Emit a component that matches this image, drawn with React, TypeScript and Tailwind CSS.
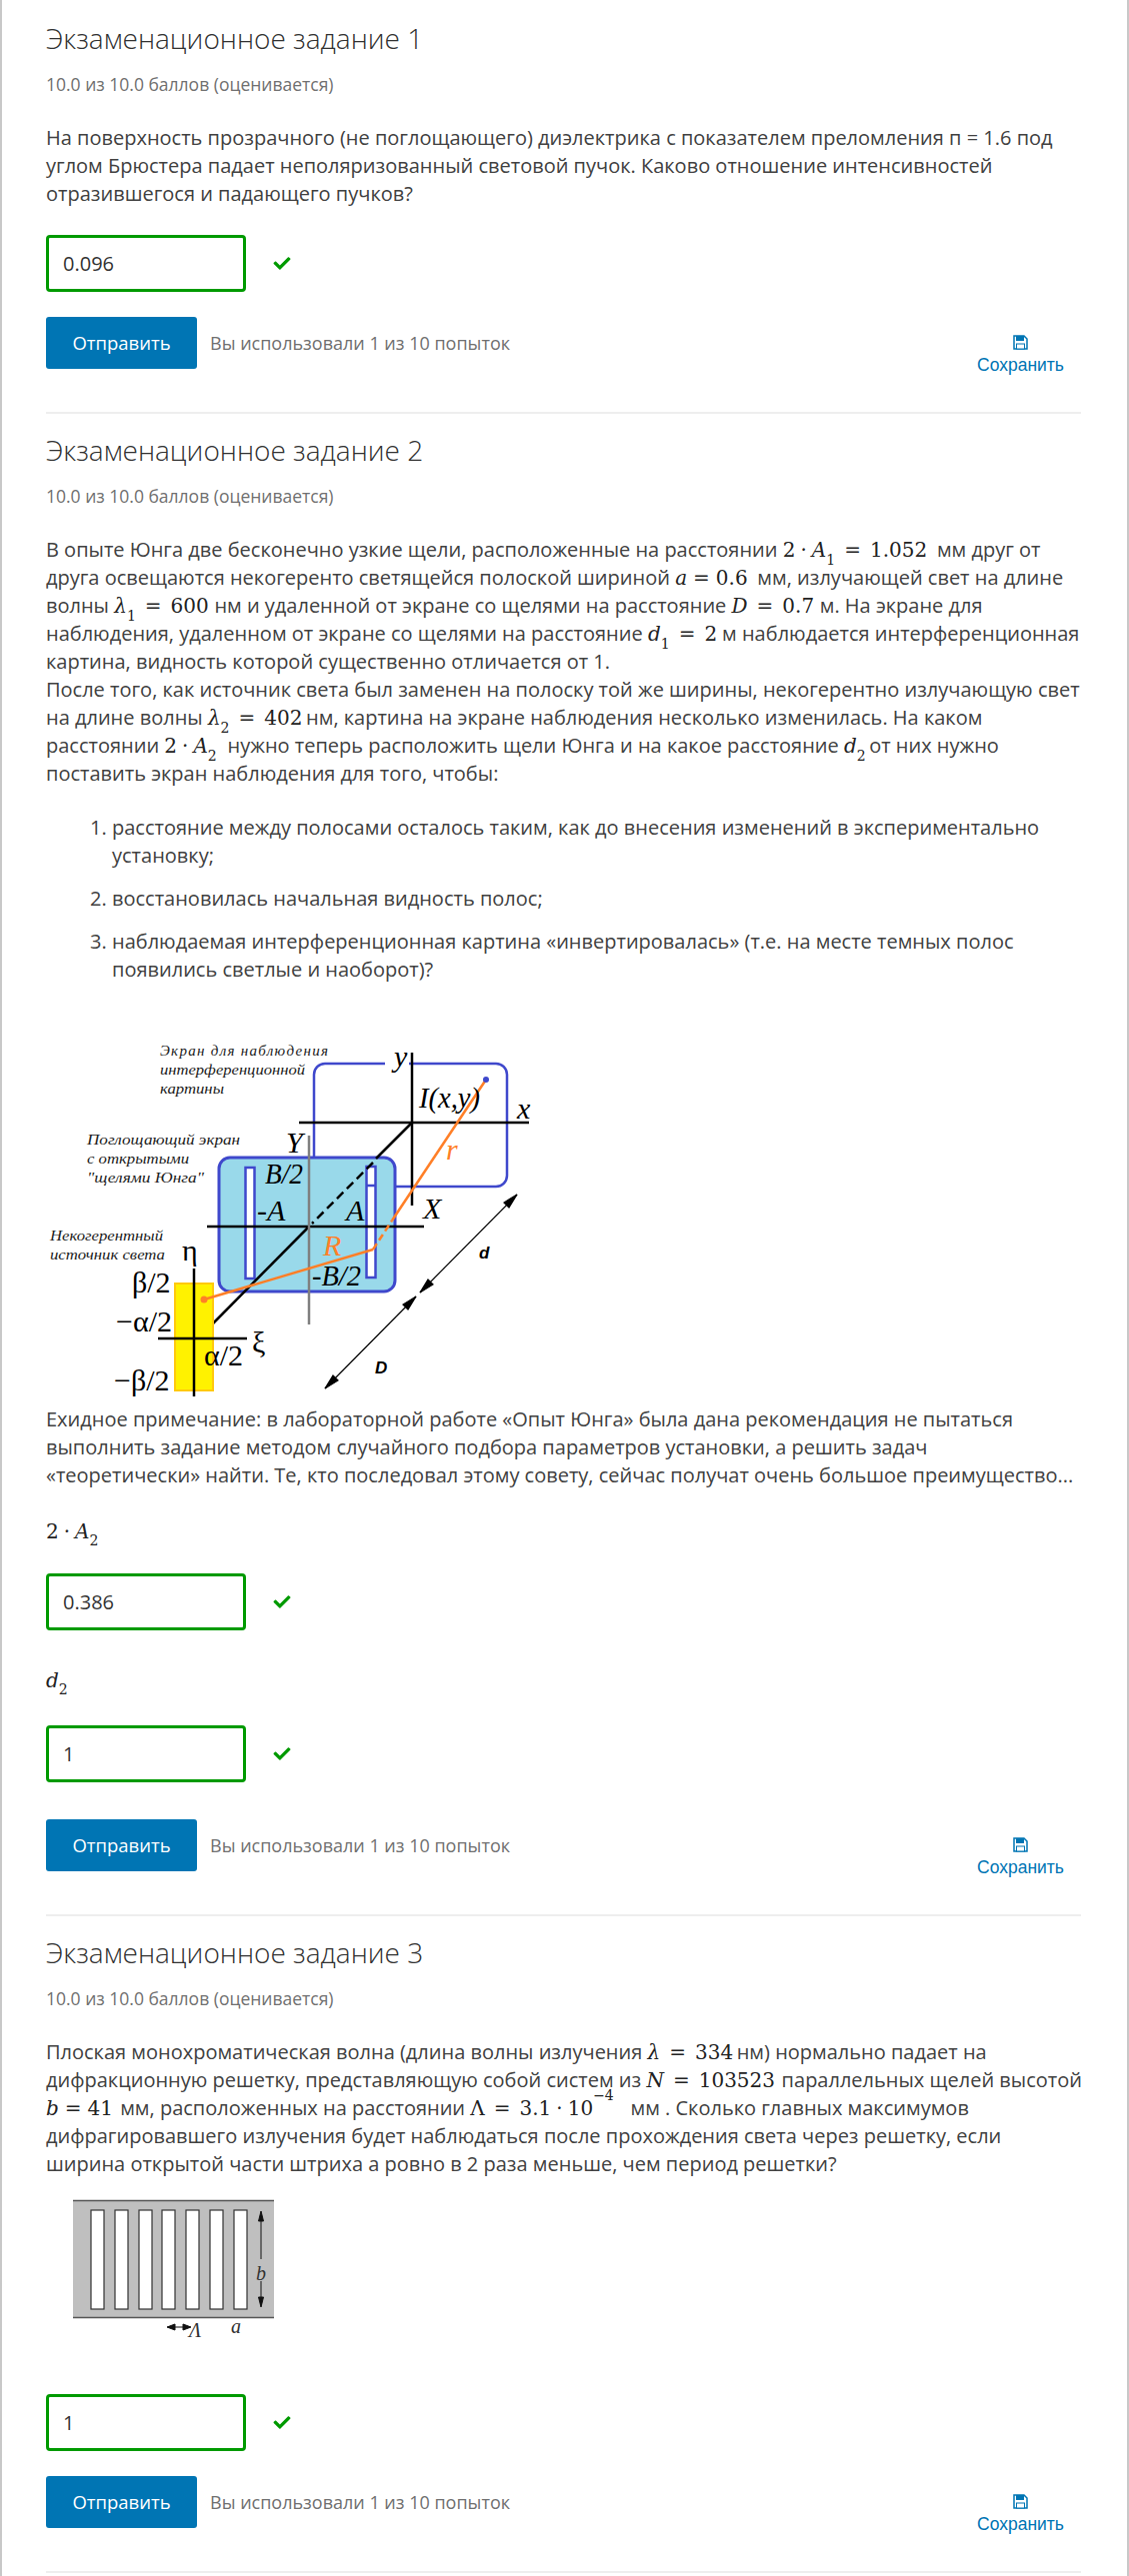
import React from 'react';
import { FaCheck } from 'react-icons/fa';

const M: React.FC<{ c: string; children: React.ReactNode }> = ({ c, children }) => (
  <span className={`inline-block whitespace-nowrap leading-none text-[#222] font-['DejaVu_Serif',serif] text-[20px] ${c}`}>{children}</span>
);

const I: React.FC<{ children: React.ReactNode }> = ({ children }) => <i className="italic">{children}</i>;

const Sub: React.FC<{ children: React.ReactNode }> = ({ children }) => (
  <sub className="text-[14px] leading-none align-[-4px]">{children}</sub>
);

const Eq: React.FC = () => <span className="mx-[9px]">=</span>;
const TightEq: React.FC = () => <span className="mx-[6px]">=</span>;
const Dot: React.FC = () => <span className="mx-[5px]">·</span>;

const SaveIcon: React.FC = () => (
  <svg viewBox="0 0 15 15" className="w-[15px] h-[15px]">
    <path d="M1 1h10l3 3v10H1z" fill="none" stroke="#0075b4" strokeWidth="1.5" />
    <rect x="3" y="1" width="8" height="5" fill="#0075b4" />
    <rect x="3.5" y="9" width="8" height="5" fill="#fff" stroke="#0075b4" strokeWidth="1" />
  </svg>
);

const Answer: React.FC<{ value: string }> = ({ value }) => (
  <div className="flex items-center gap-[26px]">
    <div className="w-[200px] h-[57px] border-[3px] border-[#009a00] rounded-[4px] flex items-center pl-[14px] text-[20px] text-[#333]">{value}</div>
    <FaCheck className="w-[20px] h-[17px] text-[#009a00]" />
  </div>
);

const Actions: React.FC = () => (
  <div className="flex items-start justify-between">
    <div className="flex items-center gap-[13px]">
      <div className="w-[151px] h-[52px] rounded-[3px] bg-[#0075b4] text-white font-medium text-[18.5px] flex items-center justify-center">Отправить</div>
      <span className="text-[18px] text-[#707070]">Вы использовали 1 из 10 попыток</span>
    </div>
    <div className="w-[87px] mr-[17px] mt-[18px] flex flex-col items-center text-[#0075b4] font-['Liberation_Sans',sans-serif] text-[17.5px] leading-[20px]">
      <SaveIcon />
      <span className="mt-[5px] whitespace-nowrap">Сохранить</span>
    </div>
  </div>
);

const Title: React.FC<{ n: number }> = ({ n }) => (
  <>
    <h3 className="text-[28px] leading-[32px] font-light text-[#313131]">Экзаменационное задание {n}</h3>
    <div className="mt-[20px] text-[17.5px] leading-[20px] text-[#707070]">10.0 из 10.0 баллов (оценивается)</div>
  </>
);

const YoungDiagram: React.FC = () => {
  const serif = "font-['Liberation_Serif',serif]";
  return (
    <svg viewBox="46 1020 520 385" className="block w-[520px] h-[385px]">
      <rect x="314" y="1063" width="193" height="123" rx="11" fill="#fff" stroke="#3f48cc" strokeWidth="2.5" />
      <rect x="385" y="1055" width="24" height="16" fill="#fff" />
      <rect x="219" y="1157" width="176" height="134" rx="11" fill="#99d9ea" stroke="#3f48cc" strokeWidth="3" />
      <rect x="245.5" y="1167" width="9" height="111" fill="#fff" stroke="#3f48cc" strokeWidth="2.5" />
      <rect x="366.5" y="1166" width="9" height="111" fill="#fff" stroke="#3f48cc" strokeWidth="2.5" />
      <line x1="366" y1="1185" x2="376" y2="1185" stroke="#3f48cc" strokeWidth="2.5" />
      <g stroke="#000" strokeWidth="2.5" fill="none">
        <line x1="299" y1="1122" x2="529" y2="1122" />
        <line x1="412" y1="1052" x2="412" y2="1205" />
        <line x1="207" y1="1226" x2="424" y2="1226" />
        <line x1="412" y1="1122" x2="376" y2="1158" />
        <line x1="373" y1="1162" x2="312" y2="1223" strokeDasharray="9 5" />
        <line x1="309" y1="1226" x2="213" y2="1323" />
      </g>
      <line x1="309" y1="1135" x2="309" y2="1324" stroke="#7f7f7f" strokeWidth="2.5" />
      <rect x="175" y="1283" width="38" height="107" fill="#fff200" stroke="#ffc90e" strokeWidth="2" />
      <g stroke="#000" strokeWidth="2.5">
        <line x1="194" y1="1268" x2="194" y2="1396" />
        <line x1="158" y1="1338" x2="247" y2="1338" />
      </g>
      <polyline points="204,1299 373,1249" fill="none" stroke="#ff7f27" strokeWidth="2.5" />
      <polyline points="373,1249 392,1220" fill="none" stroke="#ff7f27" strokeWidth="2.5" strokeDasharray="7 4" />
      <polyline points="392,1220 486,1079" fill="none" stroke="#ff7f27" strokeWidth="2.5" />
      <circle cx="204" cy="1299" r="3.5" fill="#ff7f27" />
      <circle cx="486" cy="1079" r="3" fill="#3f48cc" />
      <g stroke="#000" strokeWidth="1.2" fill="#000">
        <line x1="517" y1="1194" x2="420" y2="1292" />
        <polygon points="517,1194 504,1202 509,1207" />
        <polygon points="420,1292 433,1284 428,1279" />
        <line x1="416" y1="1296" x2="325" y2="1388" />
        <polygon points="416,1296 403,1304 408,1309" />
        <polygon points="325,1388 338,1380 333,1375" />
      </g>
      <g className={`${serif} italic`} fontSize="15" fill="#222" stroke="none">
        <text x="160" y="1055" textLength="168" lengthAdjust="spacing">Экран для наблюдения</text>
        <text x="160" y="1074" textLength="145" lengthAdjust="spacingAndGlyphs">интерференционной</text>
        <text x="160" y="1093" textLength="64" lengthAdjust="spacingAndGlyphs">картины</text>
        <text x="87" y="1144" textLength="153" lengthAdjust="spacingAndGlyphs">Поглощающий экран</text>
        <text x="87" y="1163" textLength="102" lengthAdjust="spacingAndGlyphs">с открытыми</text>
        <text x="87" y="1182" textLength="117" lengthAdjust="spacingAndGlyphs">"щелями Юнга"</text>
        <text x="50" y="1240" textLength="113" lengthAdjust="spacingAndGlyphs">Некогерентный</text>
        <text x="50" y="1259" textLength="115" lengthAdjust="spacingAndGlyphs">источник света</text>
      </g>
      <g className={serif} fill="#000" stroke="none">
        <g fontSize="30" fontStyle="italic">
          <text x="394" y="1066">y</text>
          <text x="419" y="1107" textLength="61" lengthAdjust="spacingAndGlyphs">I(x,y)</text>
          <text x="517" y="1118">x</text>
          <text x="286" y="1152">Y</text>
          <text x="265" y="1183" textLength="38" lengthAdjust="spacingAndGlyphs">B/2</text>
          <text x="257" y="1220">-A</text>
          <text x="346" y="1220">A</text>
          <text x="423" y="1218">X</text>
          <text x="312" y="1285" textLength="49" lengthAdjust="spacingAndGlyphs">-B/2</text>
          <text x="446" y="1159" fill="#ff7f27">r</text>
          <text x="323" y="1255" fill="#ff7f27">R</text>
        </g>
        <g fontSize="30">
          <text x="182" y="1260">η</text>
          <text x="132" y="1292">β/2</text>
          <text x="116" y="1331">−α/2</text>
          <text x="204" y="1365">α/2</text>
          <text x="252" y="1352">ξ</text>
          <text x="114" y="1390">−β/2</text>
        </g>
      </g>
      <g className="font-['Liberation_Sans',sans-serif] italic font-bold" fontSize="17" fill="#000">
        <text x="479" y="1258">d</text>
        <text x="375" y="1373">D</text>
      </g>
    </svg>
  );
};

const GratingDiagram: React.FC = () => {
  const slits = [91, 115, 139, 162, 186, 210, 234];
  return (
    <svg viewBox="46 2195 300 150" className="block w-[300px] h-[150px]">
      <rect x="73" y="2203" width="201" height="118" fill="#bfbfbf" />
      <line x1="73" y1="2203.5" x2="274" y2="2203.5" stroke="#555" strokeWidth="1.5" />
      <line x1="73" y1="2320.5" x2="274" y2="2320.5" stroke="#555" strokeWidth="1.5" />
      {slits.map((x) => (
        <rect key={x} x={x} y="2213" width="13" height="99" fill="#fff" stroke="#333" strokeWidth="1.2" />
      ))}
      <g stroke="#111" fill="#111" strokeWidth="1">
        <line x1="261" y1="2218" x2="261" y2="2262" />
        <line x1="261" y1="2284" x2="261" y2="2308" />
        <polygon points="261,2214 258.5,2224 263.5,2224" />
        <polygon points="261,2310 258.5,2300 263.5,2300" />
        <line x1="168" y1="2330" x2="190" y2="2330" />
        <polygon points="167,2330 175,2327 175,2333" />
        <polygon points="191,2330 183,2327 183,2333" />
      </g>
      <g className="font-['Liberation_Serif',serif] italic" fill="#333" fontSize="20">
        <text x="256" y="2283">b</text>
        <text x="189" y="2340">Λ</text>
        <text x="231" y="2336">a</text>
      </g>
    </svg>
  );
};

const App: React.FC = () => {
  return (
    <div className="w-[1129px] h-[2577px] overflow-hidden bg-white border-x-2 border-[#c8c8c8] font-['Open_Sans',sans-serif] text-[#414141]">
      <div className="pl-[44px] pr-[46px]">
        <section className="pt-[22px]">
          <Title n={1} />
          <p className="mt-[30px] text-[20px] leading-[28px] whitespace-nowrap">
            На поверхность прозрачного (не поглощающего) диэлектрика с показателем преломления п = 1.6 под<br />
            углом Брюстера падает неполяризованный световой пучок. Каково отношение интенсивностей<br />
            отразившегося и падающего пучков?
          </p>
          <div className="mt-[27px]"><Answer value="0.096" /></div>
          <div className="mt-[25px]"><Actions /></div>
          <hr className="mt-[37px] border-t-2 border-[#eeeeee]" />
        </section>

        <section className="pt-[20px]">
          <Title n={2} />
          <p className="mt-[30px] text-[20px] leading-[28px] whitespace-nowrap">
            В опыте Юнга две бесконечно узкие щели, расположенные на расстоянии <M c="w-[149px]">2<Dot /><I>A</I><Sub>1</Sub><Eq />1.052</M> мм друг от<br />
            друга освещаются некогеренто светящейся полоской шириной <M c="w-[77px]"><I>a</I><TightEq />0.6</M> мм, излучающей свет на длине<br />
            волны <M c="w-[95px]"><I>λ</I><Sub>1</Sub><Eq />600</M> нм и удаленной от экране со щелями на расстояние <M c="w-[83px]"><I>D</I><Eq />0.7</M> м. На экране для<br />
            наблюдения, удаленном от экране со щелями на расстояние <M c="w-[69px]"><I>d</I><Sub>1</Sub><Eq />2</M> м наблюдается интерференционная<br />
            картина, видность которой существенно отличается от 1.<br />
            После того, как источник света был заменен на полоску той же ширины, некогерентно излучающую свет<br />
            на длине волны <M c="w-[93px]"><I>λ</I><Sub>2</Sub><Eq />402</M> нм, картина на экране наблюдения несколько изменилась. На каком<br />
            расстоянии <M c="w-[58px]">2<Dot /><I>A</I><Sub>2</Sub></M> нужно теперь расположить щели Юнга и на какое расстояние <M c="w-[20px]"><I>d</I><Sub>2</Sub></M> от них нужно<br />
            поставить экран наблюдения для того, чтобы:
          </p>
          <ol className="mt-[26px] pl-[66px] list-decimal text-[20px] leading-[28px] flex flex-col gap-[15px] whitespace-nowrap">
            <li>расстояние между полосами осталось таким, как до внесения изменений в экспериментально<br />установку;</li>
            <li>восстановилась начальная видность полос;</li>
            <li>наблюдаемая интерференционная картина «инвертировалась» (т.е. на месте темных полос<br />появились светлые и наоборот)?</li>
          </ol>
          <div className="mt-[37px]"><YoungDiagram /></div>
          <p className="text-[20px] leading-[28px] whitespace-nowrap">
            Ехидное примечание: в лабораторной работе «Опыт Юнга» была дана рекомендация не пытаться<br />
            выполнить задание методом случайного подбора параметров установки, а решить задач<br />
            «теоретически» найти. Те, кто последовал этому совету, сейчас получат очень большое преимущество...
          </p>
          <div className="mt-[29px] h-[28px] flex items-center"><M c="w-[60px]">2<Dot /><I>A</I><Sub>2</Sub></M></div>
          <div className="mt-[27px]"><Answer value="0.386" /></div>
          <div className="mt-[37px] h-[28px] flex items-center"><M c="w-[24px]"><I>d</I><Sub>2</Sub></M></div>
          <div className="mt-[30px]"><Answer value="1" /></div>
          <div className="mt-[37px]"><Actions /></div>
          <hr className="mt-[37px] border-t-2 border-[#eeeeee]" />
        </section>

        <section className="pt-[20px]">
          <Title n={3} />
          <p className="mt-[30px] text-[20px] leading-[28px] whitespace-nowrap">
            Плоская монохроматическая волна (длина волны излучения <M c="w-[84px]"><I>λ</I><Eq />334</M> нм) нормально падает на<br />
            дифракционную решетку, представляющую собой систем из <M c="w-[130px]"><I>N</I><Eq />103523</M> параллельных щелей высотой<br />
            <M c="w-[69px]"><I>b</I><TightEq />41</M> мм, расположенных на расстоянии <M c="w-[155px]">Λ<Eq />3.1<Dot />10<sup className="text-[14px] leading-none align-[8px]">−4</sup></M> мм . Сколько главных максимумов<br />
            дифрагировавшего излучения будет наблюдаться после прохождения света через решетку, если<br />
            ширина открытой части штриха a ровно в 2 раза меньше, чем период решетки?
          </p>
          <div className="mt-[14px]"><GratingDiagram /></div>
          <div className="mt-[52px]"><Answer value="1" /></div>
          <div className="mt-[25px]"><Actions /></div>
          <hr className="mt-[37px] border-t-2 border-[#eeeeee]" />
        </section>
      </div>
    </div>
  );
};

export default App;
